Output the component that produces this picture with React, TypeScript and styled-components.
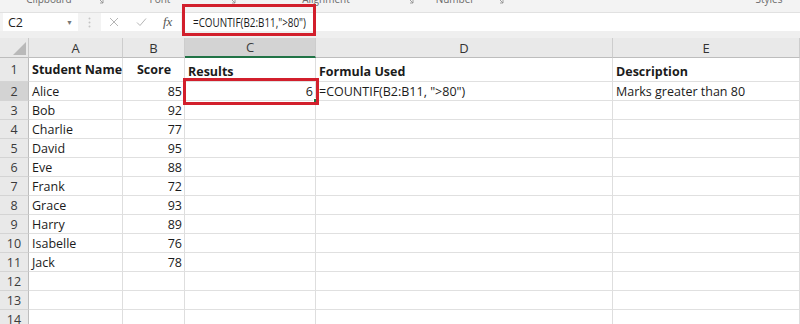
import React from 'react';
import styled, { createGlobalStyle } from 'styled-components';

const COLS = '29px 94px 62px 131px 297px 1fr';

const GlobalStyle = createGlobalStyle`
  html, body {
    margin: 0;
    padding: 0;
    background: #ffffff;
  }
  body {
    font-family: "Open Sans", "Noto Sans", sans-serif;
    color: #1b1b1b;
  }
`;

const Screen = styled.div`
  position: relative;
  width: 800px;
  height: 324px;
  overflow: hidden;
  background: #ffffff;
`;

/* ribbon group labels, only their lower half is visible */
const RibbonStrip = styled.div`
  display: flex;
  height: 12px;
  overflow: hidden;
  background: #f3f3f3;
  border-bottom: 1px solid #e1e1e1;
`;

const RibbonGroup = styled.div<{ $width: number }>`
  position: relative;
  display: flex;
  flex: 0 0 ${(p) => p.$width}px;
  align-items: flex-start;
  justify-content: center;
`;

const GroupLabel = styled.span<{ $shift?: number }>`
  margin-top: -7px;
  margin-left: ${(p) => p.$shift || 0}px;
  font-size: 10px;
  line-height: 12px;
  color: #6a6a6a;
`;

const Launcher = styled.svg`
  position: absolute;
  right: 4px;
  top: -2px;
`;

const TopArea = styled.div`
  background: #efefef;
  padding-bottom: 7px;
`;

const FormulaBar = styled.div`
  display: flex;
  align-items: stretch;
  height: 18px;
  background: #f3f3f3;
`;

const NameBox = styled.div`
  display: flex;
  align-items: center;
  justify-content: space-between;
  width: 75px;
  margin-left: 3px;
  padding: 0 5px;
  box-sizing: border-box;
  background: #ffffff;
  font-size: 12.5px;
  color: #222;
`;

const Caret = styled.span`
  font-size: 7px;
  color: #777;
`;

const Grip = styled.div`
  display: flex;
  align-items: center;
  justify-content: center;
  width: 23px;
`;

const ToolButtons = styled.div`
  display: flex;
  align-items: center;
  width: 80px;
  background: #ffffff;
`;

const ToolButton = styled.div`
  display: flex;
  align-items: center;
  justify-content: center;
  width: 27px;
  height: 100%;
`;

const Fx = styled.span`
  font-family: "Liberation Serif", serif;
  font-style: italic;
  font-size: 13px;
  color: #555;
`;

const FormulaInput = styled.div`
  flex: 1;
  display: flex;
  align-items: center;
  padding-left: 11px;
  margin-left: 1px;
  background: #ffffff;
`;

/* the formula bar text is set narrower than the grid text */
const FormulaText = styled.span`
  display: inline-block;
  font-size: 12.5px;
  color: #1b1b1b;
  white-space: nowrap;
  transform: scaleX(0.79);
  transform-origin: left center;
`;

const Row = styled.div<{ $h: number }>`
  display: grid;
  grid-template-columns: ${COLS};
  height: ${(p) => p.$h}px;
`;

const Corner = styled.div`
  display: flex;
  align-items: flex-end;
  justify-content: flex-end;
  padding: 0 2px 2px 0;
  background: #e9e9e9;
  border-right: 1px solid #c9c9c9;
  border-bottom: 1px solid #bdbdbd;
`;

const ColHead = styled.div<{ $active?: boolean }>`
  display: flex;
  align-items: center;
  justify-content: center;
  font-size: 13px;
  color: ${(p) => (p.$active ? '#3d3d3d' : '#333')};
  background: ${(p) => (p.$active ? '#d3d3d3' : '#e9e9e9')};
  border-right: 1px solid #cdcdcd;
  border-bottom: ${(p) => (p.$active ? '2px solid #217346' : '1px solid #bdbdbd')};
`;

const RowHead = styled.div<{ $active?: boolean }>`
  display: flex;
  align-items: center;
  justify-content: center;
  font-size: 12.5px;
  color: #3a3a3a;
  background: ${(p) => (p.$active ? '#d3d3d3' : '#e9e9e9')};
  border-right: 1px solid #bdbdbd;
  border-bottom: 1px solid #d4d4d4;
`;

type Align = 'left' | 'center' | 'right';

const justify: Record<Align, string> = {
  left: 'flex-start',
  center: 'center',
  right: 'flex-end',
};

const Cell = styled.div<{ $align?: Align; $bold?: boolean; $bottom?: boolean }>`
  display: flex;
  align-items: ${(p) => (p.$bottom ? 'flex-end' : 'center')};
  justify-content: ${(p) => justify[p.$align || 'left']};
  padding: ${(p) => (p.$bottom ? '0 2px 1px 3px' : '0 2px 0 3px')};
  font-size: 12.5px;
  font-weight: ${(p) => (p.$bold ? 700 : 400)};
  white-space: nowrap;
  overflow: visible;
  border-right: 1px solid #dedede;
  border-bottom: 1px solid #e0e0e0;
`;

const Callout = styled.div`
  position: absolute;
  border: 3px solid #d21f2c;
  box-sizing: border-box;
  pointer-events: none;
`;

const FillHandle = styled.div`
  position: absolute;
  left: 313px;
  top: 98px;
  width: 4px;
  height: 4px;
  background: #217346;
  border: 1px solid #ffffff;
`;

const groups = [
  { label: 'Clipboard', width: 108, shift: -10 },
  { label: 'Font', width: 132, shift: -28 },
  { label: 'Alignment', width: 178, shift: -6 },
  { label: 'Number', width: 90, shift: -16 },
  { label: 'Styles', width: 292, shift: 230 },
];

const students: [string, number][] = [
  ['Alice', 85],
  ['Bob', 92],
  ['Charlie', 77],
  ['David', 95],
  ['Eve', 88],
  ['Frank', 72],
  ['Grace', 93],
  ['Harry', 89],
  ['Isabelle', 76],
  ['Jack', 78],
];

const App = () => {
  return (
    <Screen>
      <GlobalStyle />
      <TopArea>
        <RibbonStrip>
          {groups.map((g, i) => (
            <RibbonGroup key={g.label} $width={g.width}>
              <GroupLabel $shift={g.shift}>{g.label}</GroupLabel>
              {i < 4 && (
                <Launcher width="6" height="6" viewBox="0 0 6 6">
                  <path d="M1 1 L5 5 M5 2 V5 H2" stroke="#8a8a8a" strokeWidth="0.8" fill="none" />
                </Launcher>
              )}
            </RibbonGroup>
          ))}
        </RibbonStrip>
        <FormulaBar>
          <NameBox>
            C2
            <Caret>▼</Caret>
          </NameBox>
          <Grip>
            <svg width="3" height="11" viewBox="0 0 3 11">
              <circle cx="1.5" cy="1.5" r="1" fill="#c4c4c4" />
              <circle cx="1.5" cy="5.5" r="1" fill="#c4c4c4" />
              <circle cx="1.5" cy="9.5" r="1" fill="#c4c4c4" />
            </svg>
          </Grip>
          <ToolButtons>
            <ToolButton>
              <svg width="10" height="10" viewBox="0 0 10 10">
                <path d="M1 1 L9 9 M9 1 L1 9" stroke="#b5b5b5" strokeWidth="1" />
              </svg>
            </ToolButton>
            <ToolButton>
              <svg width="11" height="10" viewBox="0 0 11 10">
                <path d="M1 5.5 L4 8.5 L10 1.5" stroke="#b5b5b5" strokeWidth="1" fill="none" />
              </svg>
            </ToolButton>
            <ToolButton>
              <Fx>fx</Fx>
            </ToolButton>
          </ToolButtons>
          <FormulaInput>
            <FormulaText>=COUNTIF(B2:B11,"&gt;80")</FormulaText>
          </FormulaInput>
        </FormulaBar>
      </TopArea>

      <Row $h={20}>
        <Corner>
          <svg width="13" height="13" viewBox="0 0 13 13">
            <path d="M13 0 L13 13 L0 13 Z" fill="#b9b9b9" />
          </svg>
        </Corner>
        <ColHead>A</ColHead>
        <ColHead>B</ColHead>
        <ColHead $active>C</ColHead>
        <ColHead>D</ColHead>
        <ColHead>E</ColHead>
      </Row>

      <Row $h={24}>
        <RowHead>1</RowHead>
        <Cell $bold>Student Name</Cell>
        <Cell $bold $align="center">Score</Cell>
        <Cell $bold $bottom>Results</Cell>
        <Cell $bold $bottom>Formula Used</Cell>
        <Cell $bold $bottom>Description</Cell>
      </Row>

      {students.map(([name, score], i) => {
        const n = i + 2;
        const first = n === 2;
        return (
          <Row $h={19} key={name}>
            <RowHead $active={first}>{n}</RowHead>
            <Cell>{name}</Cell>
            <Cell $align="right">{score}</Cell>
            <Cell $align="right">{first ? '6' : ''}</Cell>
            <Cell>{first ? '=COUNTIF(B2:B11, ">80")' : ''}</Cell>
            <Cell>{first ? 'Marks greater than 80' : ''}</Cell>
          </Row>
        );
      })}

      {[12, 13, 14].map((n) => (
        <Row $h={19} key={n}>
          <RowHead>{n}</RowHead>
          <Cell />
          <Cell />
          <Cell />
          <Cell />
          <Cell />
        </Row>
      ))}

      <FillHandle />
      <Callout style={{ left: 182, top: 4, width: 134, height: 32 }} />
      <Callout style={{ left: 183, top: 78, width: 136, height: 27 }} />
    </Screen>
  );
};

export default App;
